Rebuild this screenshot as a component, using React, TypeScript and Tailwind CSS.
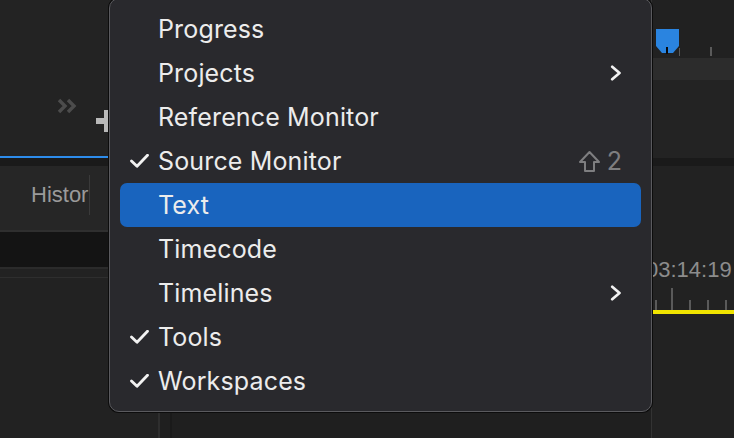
import React from "react";

const Check = () => (
  <svg width="19" height="14" viewBox="0 0 19 14" fill="none">
    <path d="M1.5 7 L7 12.3 L17.5 1.2" stroke="#f2f2f2" strokeWidth="2.8" strokeLinecap="round" strokeLinejoin="round" />
  </svg>
);

const Chevron = () => (
  <svg width="12" height="16" viewBox="0 0 12 16" fill="none">
    <path d="M2.2 1.8 L9.5 8 L2.2 14.2" stroke="#f2f2f2" strokeWidth="2.7" strokeLinecap="round" strokeLinejoin="round" />
  </svg>
);

const Shift = () => (
  <svg width="23" height="23" viewBox="0 0 23 23" fill="none">
    <path d="M11.5 2 L21 12 H16 V21 H7 V12 H2 Z" stroke="#7e7e80" strokeWidth="2" strokeLinejoin="round" />
  </svg>
);

type Item = { label: string; checked?: boolean; sub?: boolean; shortcut?: boolean; active?: boolean };

const items: Item[] = [
  { label: "Progress" },
  { label: "Projects", sub: true },
  { label: "Reference Monitor" },
  { label: "Source Monitor", checked: true, shortcut: true },
  { label: "Text", active: true },
  { label: "Timecode" },
  { label: "Timelines", sub: true },
  { label: "Tools", checked: true },
  { label: "Workspaces", checked: true },
];

export default function App() {
  return (
    <div
      className="relative w-[734px] h-[438px] overflow-hidden bg-[#222222] flex"
      style={{ fontFamily: "Inter, 'Noto Sans', sans-serif" }}
    >
      {/* Left column */}
      <div className="w-[158px] flex flex-col shrink-0">
        <div className="h-[156px] bg-[#232323] flex items-start pl-[57px] pt-[98px] gap-[18px]">
          <svg width="21" height="16" viewBox="0 0 21 16" fill="none">
            <path d="M2 2 L8 8 L2 14 M11 2 L17 8 L11 14" stroke="#4c4c4c" strokeWidth="3.4" strokeLinejoin="miter" />
          </svg>
          <svg width="22" height="22" viewBox="0 0 22 22" className="mt-[12px]">
            <rect x="0" y="8" width="22" height="6" fill="#b9b9b9" />
            <rect x="8" y="0" width="6" height="22" fill="#b9b9b9" />
          </svg>
        </div>
        <div className="h-[2px] bg-[#2d8ceb]" />
        <div className="h-[8px] bg-[#1a1a1a]" />
        <div className="h-[64px] bg-[#262626] flex items-center pl-[31px] pb-[6px]">
          <span
            className="text-[22px] text-[#9a9a9a] leading-none"
            style={{ fontFamily: "'Liberation Sans', Arial, sans-serif" }}
          >
            Histor
          </span>
          <div className="ml-[1px] w-[1px] h-[40px] bg-[#3a3a3a]" />
        </div>
        <div className="h-[2px] bg-[#2f2f2f]" />
        <div className="h-[35px] bg-[#141414]" />
        <div className="h-[2px] bg-[#2b2b2b]" />
        <div className="h-[8px] bg-[#222222]" />
        <div className="h-[1px] bg-[#2e2e2e]" />
        <div className="flex-1 bg-[#222222]" />
      </div>

      {/* Middle column */}
      <div className="flex-1 flex border-l-2 border-[#2e2e2e] bg-[#1f1f1f]">
        <div className="w-[10px]" />
        <div className="w-[2px] bg-[#1a1a1a]" />
        <div className="flex-1" />
      </div>

      {/* Right column */}
      <div className="w-[83px] shrink-0 flex flex-col border-l border-[#333333]">
        <div className="h-[58px] bg-[#212121] flex items-end gap-[0px] pl-[4px] pb-[2px]">
          <svg width="23" height="25" viewBox="0 0 23 25" className="mb-[2px]">
            <path d="M0 0 H23 V17 L17 24 H6 L0 17 Z" fill="#2a84e0" />
            <rect x="10" y="18" width="2" height="7" fill="#0a0a0a" />
          </svg>
          <div className="w-[1px] h-[8px] bg-[#5a5a5a]" />
          <div className="ml-[30px] w-[2px] h-[9px] bg-[#5a5a5a]" />
        </div>
        <div className="h-[22px] bg-[#2c2c2c]" />
        <div className="h-[78px] bg-[#232323]" />
        <div className="h-[8px] bg-[#1a1a1a]" />
        <div className="flex-1 bg-[#222222] flex flex-col pt-[92px]">
          <div
            className="-ml-[6px] text-[22px] leading-[24px] text-[#8c8c8c] whitespace-nowrap"
            style={{ fontFamily: "'Liberation Sans', Arial, sans-serif" }}
          >
            03:14:19
          </div>
          <div className="mt-[6px] h-[22px] flex items-end pl-[3px]">
            <div className="w-[2px] h-[10px] bg-[#5a5a5a]" />
            <div className="ml-[14px] w-[2px] h-[22px] bg-[#5a5a5a]" />
            <div className="ml-[16px] w-[2px] h-[10px] bg-[#5a5a5a]" />
            <div className="ml-[16px] w-[2px] h-[10px] bg-[#5a5a5a]" />
            <div className="ml-[16px] w-[2px] h-[10px] bg-[#5a5a5a]" />
          </div>
          <div className="h-[4px] bg-[#f0e400]" />
        </div>
      </div>

      {/* Menu */}
      <div className="absolute left-[109px] top-[-2px] w-[543px] h-[414px] rounded-[10px] border border-[#5a5a5e] shadow-[0_0_0_1px_#0c0c0c] bg-[#29292d] px-[10px] py-[8px] flex flex-col">
        {items.map((it) => (
          <div
            key={it.label}
            className={
              "h-[44px] flex items-center rounded-[7px] " + (it.active ? "bg-[#1964be]" : "")
            }
          >
            <div className="w-[38px] pl-[10px] flex items-center">{it.checked ? <Check /> : null}</div>
            <div className="flex-1 text-[25px] leading-none text-[#ececec] tracking-[0.15px]">{it.label}</div>
            {it.sub ? (
              <div className="pr-[19px] flex items-center">
                <Chevron />
              </div>
            ) : null}
            {it.shortcut ? (
              <div className="pr-[19px] flex items-center gap-[6px]">
                <Shift />
                <span className="text-[25px] leading-none text-[#7e7e80]">2</span>
              </div>
            ) : null}
          </div>
        ))}
      </div>
    </div>
  );
}
